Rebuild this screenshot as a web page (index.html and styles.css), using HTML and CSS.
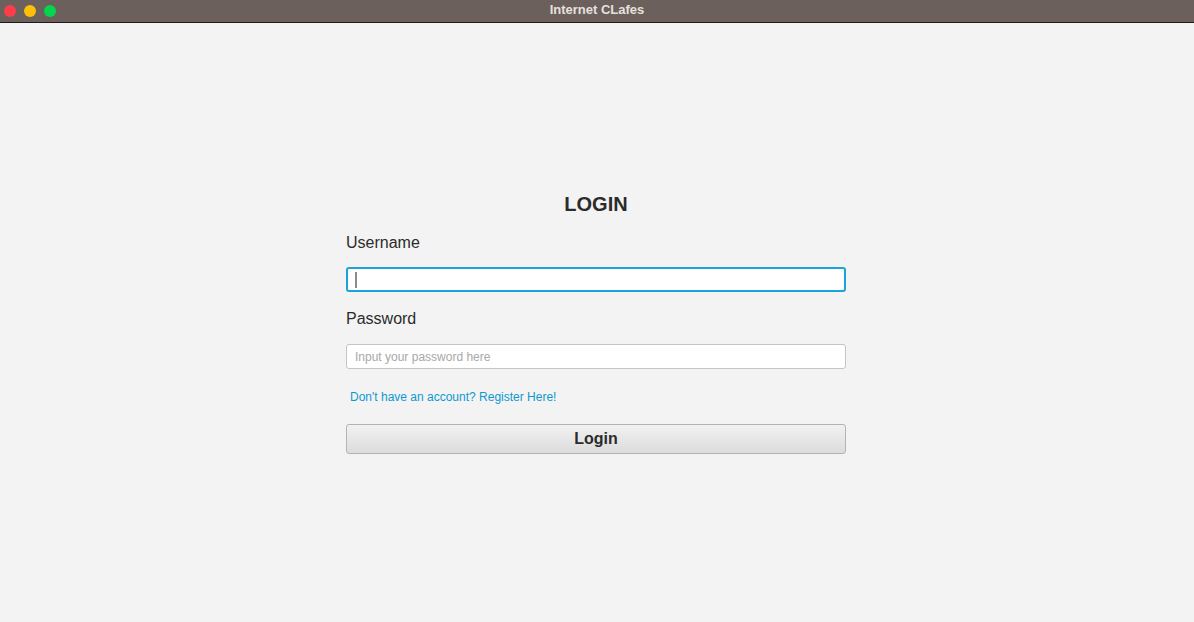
FILE: index.html
```html
<!DOCTYPE html>
<html>
<head>
<meta charset="utf-8">
<link rel="stylesheet" href="styles.css">
</head>
<body>
<div class="window">
  <div class="titlebar">
    <div class="lights">
      <span class="light red"></span>
      <span class="light yellow"></span>
      <span class="light green"></span>
    </div>
    <div class="title">Internet CLafes</div>
  </div>
  <div class="content">
    <form class="login">
      <h1 class="heading">LOGIN</h1>
      <label class="label">Username</label>
      <div class="field focused"><span class="caret"></span></div>
      <label class="label pw">Password</label>
      <div class="field"><span class="placeholder">Input your password here</span></div>
      <a class="link">Don't have an account? Register Here!</a>
      <div class="button">Login</div>
    </form>
  </div>
</div>
</body>
</html>
```
FILE: styles.css
```css
* { box-sizing: border-box; }
html, body { margin: 0; padding: 0; }
body {
  width: 1194px;
  height: 622px;
  overflow: hidden;
  font-family: "Liberation Sans", Arial, sans-serif;
  background: #f3f3f3;
}
.window { display: flex; flex-direction: column; height: 622px; }
.titlebar {
  height: 23px;
  background: #6b605c;
  border-bottom: 1px solid #1e1a18;
  display: flex;
  align-items: center;
  position: relative;
  flex-shrink: 0;
}
.lights { display: flex; gap: 8px; padding-left: 4px; align-items: center; height: 18px; }
.light { width: 12px; height: 12px; border-radius: 50%; display: block; }
.red { background: #fe3d4a; }
.yellow { background: #fdbf07; }
.green { background: #05d54c; }
.title {
  position: absolute;
  left: 0; right: 0; top: 0;
  height: 19px;
  line-height: 19px;
  text-align: center;
  color: #e6e1dd;
  font-weight: bold;
  font-size: 13px;
}
.content {
  flex: 1;
  background: #f3f3f3;
  display: flex;
  justify-content: center;
  padding-right: 2px;
}
.login {
  width: 500px;
  margin-top: 169px;
  display: flex;
  flex-direction: column;
}
.heading {
  margin: 0;
  text-align: center;
  font-size: 20px;
  line-height: 24px;
  font-weight: bold;
  color: #2b2b2b;
}
.label {
  margin-top: 16px;
  font-size: 16px;
  line-height: 22px;
  color: #2b2b2b;
}
.label.pw { margin-top: 16px; }
.field {
  margin-top: 14px;
  height: 25px;
  background: #fff;
  border: 1px solid #c4c4c4;
  border-radius: 3px;
  display: flex;
  align-items: center;
  padding-left: 8px;
}
.field.focused {
  border: 2px solid #1ba3db;
  padding-left: 7px;
  margin-top: 13px;
  height: 25px;
}
.caret { width: 2px; height: 16px; background: #8a8a8a; display: block; }
.placeholder { font-size: 12px; color: #a8a8a8; }
.link {
  margin-top: 21px;
  padding-left: 4px;
  font-size: 12px;
  line-height: 14px;
  color: #0e98d0;
}
.button {
  margin-top: 20px;
  height: 30px;
  border: 1px solid #b3b3b3;
  border-radius: 3px;
  background: linear-gradient(#f1f1f1, #dcdcdc);
  text-align: center;
  font-weight: bold;
  font-size: 16px;
  line-height: 28px;
  color: #2b2b2b;
}
```
